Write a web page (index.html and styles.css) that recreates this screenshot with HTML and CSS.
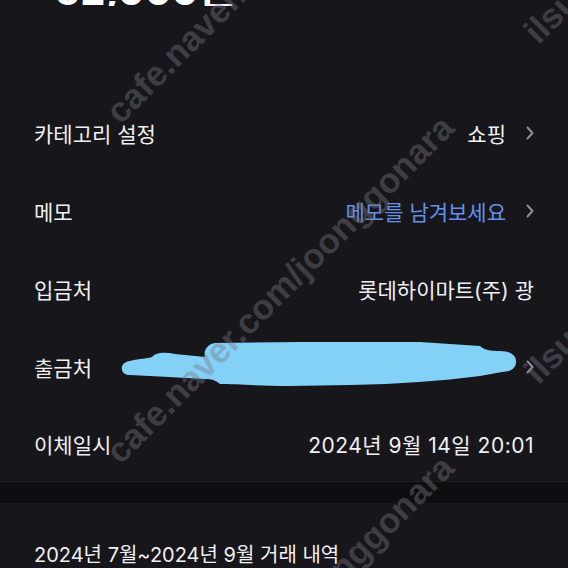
FILE: index.html
```html
<!DOCTYPE html>
<html lang="ko">
<head>
<meta charset="utf-8">
<link rel="stylesheet" href="styles.css">
<title>거래 상세</title>
</head>
<body>
<div class="page">
  <div class="amount"><span>-52,000원</span></div>

  <ul class="rows">
    <li class="row">
      <span class="label">카테고리 설정</span>
      <span class="value">쇼핑<svg class="chev" viewBox="0 0 8 14"><path d="M1.5 1.5 L6.5 7 L1.5 12.5"/></svg></span>
    </li>
    <li class="row">
      <span class="label">메모</span>
      <span class="value memo">메모를 남겨보세요<svg class="chev" viewBox="0 0 8 14"><path d="M1.5 1.5 L6.5 7 L1.5 12.5"/></svg></span>
    </li>
    <li class="row">
      <span class="label">입금처</span>
      <span class="value">롯데하이마트(주) 광</span>
    </li>
    <li class="row">
      <span class="label">출금처</span>
      <span class="value"><svg class="chev" viewBox="0 0 8 14"><path d="M1.5 1.5 L6.5 7 L1.5 12.5"/></svg></span>
    </li>
    <li class="row">
      <span class="label">이체일시</span>
      <span class="value date">2024년 9월 14일 20:01</span>
    </li>
  </ul>

  <div class="gap"></div>

  <div class="history">2024년 7월~2024년 9월 거래 내역</div>

  <!-- 개인정보 가림 낙서 -->
  <svg class="scribble" viewBox="0 0 568 568">
    <path d="M130 361 C140 358 148 359 152 357 C156 352 166 352 175 354 L205 357 C203 350 208 344 215 343 L300 342 L420 342 L480 346 C484 350 490 351 500 351 C512 351 517 357 516 363 C515 369 510 372 502 372 L480 376 C440 381 400 384 350 385 L290 386 C260 386 235 384 220 384 C215 380 212 379 205 379 L150 376 L130 375 C119 375 119 362 130 361 Z"/>
  </svg>

  <span class="wm" style="left:124px; top:94px">cafe.naver.com/joonggonara</span>
  <span class="wm" style="left:124px; top:434px">cafe.naver.com/joonggonara</span>
  <span class="wm" style="left:124px; top:774px">cafe.naver.com/joonggonara</span>
  <span class="wm" style="left:542px; top:14px">ilsunmoon</span>
  <span class="wm" style="left:542px; top:354px">ilsunmoon</span>
</div>
</body>
</html>
```

FILE: styles.css
```css
html, body {
	margin: 0;
	padding: 0;
	background-color: #17161b;
}
.page {
	position: relative;
	width: 568px;
	height: 568px;
	overflow: hidden;
	font-family: "Inter", "Noto Sans CJK KR", sans-serif;
	font-size: 21px;
	color: #f0f0f2;
}
.amount {
	height: 6px;
	overflow: hidden;
	padding-left: 36px;
}
.amount span {
	display: block;
	margin-top: -31px;
	font-size: 40px;
	line-height: 44px;
	font-weight: 700;
	color: #ffffff;
}
.rows {
	list-style: none;
	margin: 0;
	padding: 88px 0 0 0;
}
.row {
	display: flex;
	align-items: center;
	justify-content: space-between;
	height: 78px;
	padding: 0 34px;
}
.row:last-child {
	height: 75px;
}
.value {
	display: flex;
	align-items: center;
}
.memo {
	color: #6490ec;
}
.date {
	letter-spacing: 0.5px;
}
.chev {
	width: 8px;
	height: 14px;
	margin-left: 20px;
	fill: none;
	stroke: #8e8e93;
	stroke-width: 2;
	stroke-linecap: round;
	stroke-linejoin: round;
}
.gap {
	height: 21px;
	background-color: #0e0e11;
	border-top: 1px solid #1f1f24;
}
.history {
	padding: 40px 34px 0 34px;
	font-size: 20px;
	line-height: 24px;
}
.scribble {
	position: absolute;
	left: 0;
	top: 0;
	width: 568px;
	height: 568px;
	fill: #84d1f7;
}
.wm {
	position: absolute;
	font-family: "Liberation Sans", Arial, sans-serif;
	font-weight: 700;
	font-size: 35px;
	line-height: 35px;
	white-space: nowrap;
	color: rgba(120, 120, 128, 0.42);
	transform-origin: 0 100%;
	transform: rotate(-45deg);
}
```
